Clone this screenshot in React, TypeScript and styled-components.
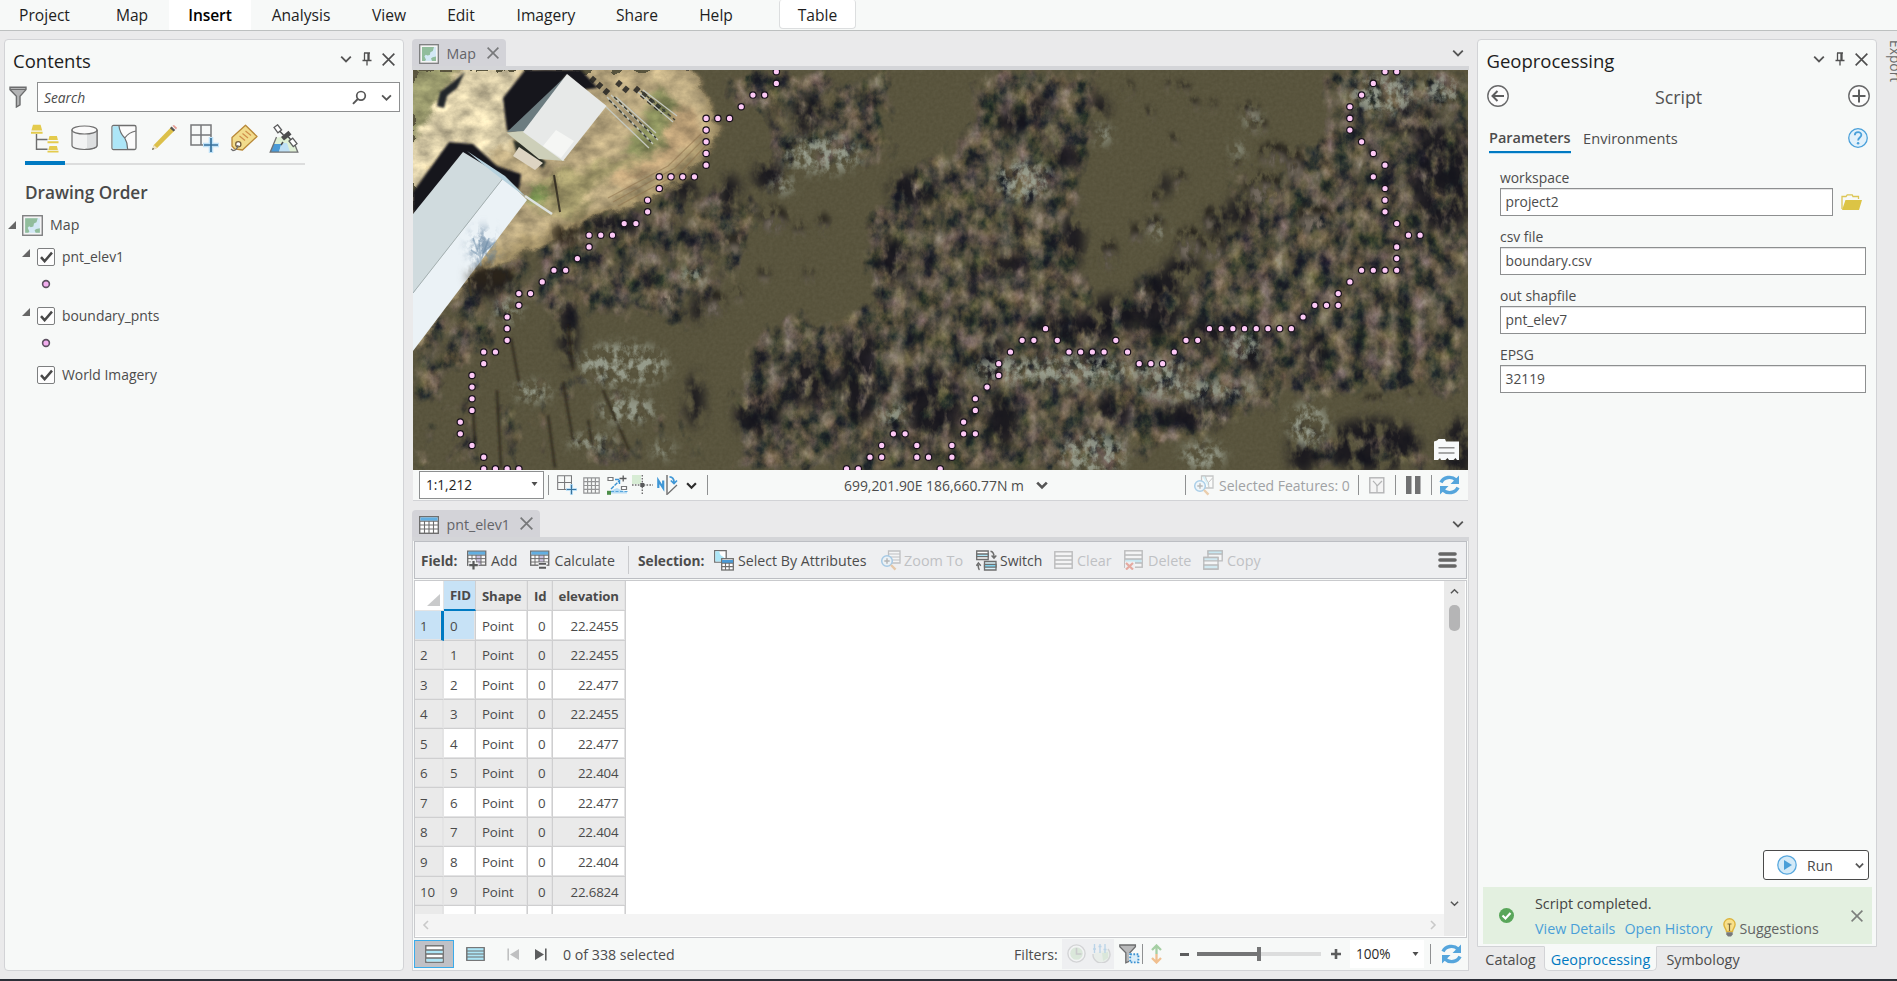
import React from 'react';
import styled, { createGlobalStyle, css } from 'styled-components';

const Global = createGlobalStyle`
  * { box-sizing: border-box; }
  html, body { margin: 0; padding: 0; overflow: hidden; }
  body { font-family: "Open Sans", "Noto Sans", sans-serif; font-size: 14px; color: #4c4c4c; }
  svg { display: block; flex: none; }
`;

/* ---------- shared parts ---------- */

const Screen = styled.div`
  width: 1897px; height: 981px; display: flex; flex-direction: column;
  background: #eaeaeb; overflow: hidden; border-bottom: 2px solid #2c2f37;
`;

const Ribbon = styled.nav`
  height: 31px; flex: none; display: flex; background: #f7f9f8;
  border-bottom: 1px solid #bdc0c0;
`;

const RibbonTab = styled.div<{ $w: number; $ml?: number; $kind?: 'active' | 'context' }>`
  width: ${p => p.$w}px; margin-left: ${p => p.$ml || 0}px;
  display: flex; align-items: center; justify-content: center;
  font-size: 15.6px; color: #1e1e1e; white-space: nowrap;
  ${p => p.$kind === 'active' && css`background: #fff; font-weight: 600; color: #000; letter-spacing: -0.1px;`}
  ${p => p.$kind === 'context' && css`
    background: #fff; height: 29px; border: 1px solid #dcdedf; border-top: 0; padding-top: 1px;
    border-radius: 3px 3px 4px 4px;`}
`;

const Workspace = styled.main`
  flex: 1; min-height: 0; display: flex; padding: 8px 0 8px 4px;
`;

const Panel = styled.section`
  display: flex; flex-direction: column; background: #f7f9f8;
  border: 1px solid #d2d3d6; border-radius: 4px; min-height: 0;
`;

const PanelHeader = styled.header<{ $pl: number; $pr: number }>`
  display: flex; align-items: center; height: 40px; flex: none; padding: 1px ${p => p.$pr}px 0 ${p => p.$pl}px;
`;

const PanelTitle = styled.h1`
  flex: 1; margin: 0; font-size: 18.5px; font-weight: 400; color: #1d1d1d;
`;

const HeaderButtons = styled.div`
  display: flex; align-items: center; gap: 9px; margin-top: -3px;
`;

const Spacer = styled.div`flex: 1;`;

/* ---------- contents panel ---------- */

const ContentsPanel = styled(Panel)`width: 400px; flex: none;`;

const SearchRow = styled.div`
  display: flex; align-items: center; padding: 2px 3px 0 4px; gap: 10px; height: 32px; flex: none;
`;

const SearchBox = styled.div`
  flex: 1; height: 30px; display: flex; align-items: center; background: #fff;
  border: 1px solid #8d8f90; padding: 0 7px 0 6px;
  span { flex: 1; font-size: 13.8px; font-style: italic; color: #4b4b4b; }
  svg + svg { margin-left: 14px; }
`;

const ListModes = styled.div`
  display: flex; margin: 9px 0 0 20px; flex: none;
`;

const ListMode = styled.div<{ $on?: boolean }>`
  width: 40px; height: 44px; padding: 3px 2px 0 0; display: flex; justify-content: center; align-items: flex-start;
  border-bottom: ${p => (p.$on ? '4px solid #007ac2' : '2px solid #dcdddd')};
`;

const SectionTitle = styled.h2`
  margin: 14px 0 0 20px; font-size: 17.2px; line-height: 28px; font-weight: 600; color: #494949;
`;

const TreeRow = styled.div<{ $pl: number; $h: number }>`
  display: flex; align-items: center; height: ${p => p.$h}px; padding-left: ${p => p.$pl}px; flex: none;
  font-size: ${p => (p.$pl < 10 ? 14.2 : 13.9)}px; line-height: 1;
`;

const Arrow = styled.div<{ $root?: boolean }>`
  margin: ${p => (p.$root ? '-2px 6px 0 0' : '-8px 7px 0 0')};
`;

const RootName = styled.span`margin-left: 7px;`;

const CheckBox = styled.div`
  width: 18px; height: 18px; flex: none; display: grid; place-items: center; margin-right: 7px;
  background: #fdfdfd; border: 1px solid #7d7f80; border-radius: 2px;
`;

/* ---------- centre column ---------- */

const Center = styled.div`
  width: 1057px; margin-left: 8px; display: flex; flex-direction: column; min-height: 0;
`;

const DocTabs = styled.div<{ $mt?: number }>`
  display: flex; height: 31px; flex: none; border-bottom: 4px solid #d4d5d8;
  justify-content: space-between; padding-right: 5px; margin-top: ${p => p.$mt || 0}px;
`;

const DocTab = styled.div<{ $w: number }>`
  width: ${p => p.$w}px; height: 27px; display: flex; align-items: center; background: #d3d3d8;
  border-radius: 4px 4px 0 0; padding: 2px 0 0 7px;
  span { margin-left: 7.5px; flex: 1; font-size: 14.2px; color: #636468; }
  > svg:last-child { margin: -2px 7px 0 0; }
`;

const TabMenu = styled.div`display: flex; align-items: center; padding-top: 1px;`;

const MapFrame = styled.div`
  position: relative; width: 1055px; height: 400px; margin-left: 1px; flex: none; overflow: hidden; background: #57523a;
`;

const LegendButton = styled.div`position: absolute; right: 9px; bottom: 10px;`;

const StatusBar = styled.div`
  height: 31px; flex: none; display: flex; align-items: center; background: #f7f9f8; margin: 0 1px;
  border-bottom: 1px solid #d2d3d6; padding-left: 6px;
`;

const Combo = styled.div`
  width: 125px; height: 28px; display: flex; align-items: center; justify-content: space-between;
  background: #fff; border: 1px solid #8d8f90; padding: 0 5px 2px 6px; font-size: 13.6px; color: #222;
`;

const Divider = styled.i<{ $ml: number; $h?: number; $c?: string }>`
  width: 1px; height: ${p => p.$h || 20}px; flex: none; margin-left: ${p => p.$ml}px; background: ${p => p.$c || '#8f9192'};
`;

const Slot = styled.div<{ $ml: number; $w: number; $dim?: boolean }>`
  margin-left: ${p => p.$ml}px; width: ${p => p.$w}px; flex: none; display: flex; justify-content: center;
  opacity: ${p => (p.$dim ? 0.4 : 1)};
`;

const BarText = styled.span<{ $ml: number; $w: number; $b?: boolean; $c?: string; $size?: number }>`
  margin-left: ${p => p.$ml}px; width: ${p => p.$w}px; flex: none; white-space: nowrap;
  font-size: ${p => p.$size || 14.2}px; font-weight: ${p => (p.$b ? 700 : 400)};
  color: ${p => p.$c || '#4c4c4c'};
`;

const DIM = '#bfc1c4';

const TablePane = styled.div`
  flex: 1; min-height: 0; display: flex; flex-direction: column; background: #f7f9f8;
  border: 1px solid #d2d3d6; border-top: 0; padding: 0 1px;
`;

const TableToolbar = styled.div`
  height: 38px; flex: none; display: flex; align-items: center; background: #eeeff1; border: 1px solid #bcbec3;
  padding: 0 9px 0 7px;
`;

const GridBox = styled.div`
  margin-top: 1px; height: 358px; flex: none; display: flex; background: #fff; border: 1px solid #c9cacd; padding: 0 1px 1px 0;
`;

const GridMain = styled.div`flex: 1; display: flex; flex-direction: column; min-width: 0;`;

const GridRows = styled.div`height: 333px; overflow: hidden;`;

const GridRow = styled.div<{ $shade?: boolean; $head?: boolean }>`
  display: grid; grid-template-columns: 29px 32px 52px 24.5px 73px; width: 210.5px;
  height: ${p => (p.$head ? 30 : 29.55)}px; font-size: ${p => (p.$head ? 13.2 : 13.3)}px;
  font-weight: ${p => (p.$head ? 700 : 400)};
  background: ${p => (p.$shade || p.$head ? '#eaeaea' : '#fff')};
`;

const Cell = styled.div<{ $kind?: 'corner' | 'num' | 'current' | 'sort' | 'selected'; $right?: boolean }>`
  display: flex; align-items: center; padding: 2px 6px 0 6px; line-height: 1;
  justify-content: ${p => (p.$right ? 'flex-end' : 'flex-start')};
  border-right: 1px solid #cfcfd0; border-bottom: 1px solid #cfcfd0; box-shadow: inset -1px -1px 0 #e3e3e4;
  white-space: nowrap; color: #4a4a4a; letter-spacing: -0.15px;
  ${p => p.$kind === 'num' && css`background: #eaeaea; border-right-color: #e4e4e4; padding-left: 5px;`}
  ${p => p.$kind === 'current' && css`background: #c7e2f6; border-right: 3px solid #007ac2; padding-left: 5px;`}
  ${p => p.$kind === 'sort' && css`background: #c7e2f6; border-bottom: 2px solid #007ac2; box-shadow: none;`}
  ${p => p.$kind === 'selected' && css`background: #c7e2f6;`}
  ${p => p.$kind === 'corner' && css`
    background: #fff; justify-content: flex-end; align-items: flex-end; padding: 0 3px 4px 0;
    border-color: #fff #e4e4e4 #e4e4e4 #fff; box-shadow: none;`}
`;

const HScroll = styled.div`
  flex: 1; background: #f4f4f4; display: flex; justify-content: space-between; align-items: center; padding: 0 6px;
`;

const VScroll = styled.div`
  width: 21px; background: #eaeaea; display: flex; flex-direction: column; align-items: center; padding: 6px 0 28px 0;
`;

const Thumb = styled.div`width: 11px; height: 26px; border-radius: 5px; background: #b5b5b6; margin: 9px 0 auto;`;

const TableFooter = styled.div`flex: 1; display: flex; align-items: center;`;

const ViewToggle = styled.div`
  width: 40px; height: 28px; display: grid; place-items: center; background: #c0c1c6; border: 1px solid #3aabea;
`;

const DisabledGroup = styled.div`
  margin-left: 6px; width: 52px; height: 30px; display: flex; align-items: center; justify-content: space-between;
  padding: 0 3px 2px 5px; background: #eeeff1; flex: none; svg { opacity: 0.28; }
`;

const Slider = styled.div`
  margin-left: 8px; width: 124px; height: 14px; display: flex; align-items: center; flex: none;
  i { height: 4px; background: #dcdddd; flex: 1; }
  i:first-child { flex: none; width: 60px; background: #747576; }
  b { width: 4px; height: 14px; background: #747576; }
`;

const ZoomCombo = styled.div`
  margin-left: 9px; width: 74px; height: 28px; background: #fff; display: flex; align-items: center;
  justify-content: space-between; padding: 0 5px 1px 6px; font-size: 13.6px; color: #2a2a2a; flex: none;
`;

/* ---------- geoprocessing column ---------- */

const RightColumn = styled.div`width: 400px; margin-left: 8px; display: flex; flex-direction: column;`;

const GpPanel = styled(Panel)`height: 908px; flex: none; border-bottom-left-radius: 0; border-bottom-right-radius: 0;`;

const ToolHeader = styled.div`
  height: 36px; display: flex; align-items: center; justify-content: space-between; padding: 0 6px 4px 9px; flex: none;
  span { font-size: 17.8px; color: #515151; padding-top: 2px; }
`;

const ToolTabs = styled.div`
  display: flex; align-items: flex-start; margin: 12px 8px 0 11px; height: 28px; flex: none; font-size: 14.6px;
  > svg { margin-left: auto; }
`;

const ToolTab = styled.div<{ $on?: boolean }>`
  height: 25px; margin-right: 12.5px; line-height: 20px;
  ${p => p.$on && css`font-weight: 600; font-size: 14.5px; border-bottom: 2px solid #007ac2; box-shadow: 0 1px 0 #bfe0f5;`}
`;

const Fields = styled.div`padding: 12px 10px 0 22px; flex: none;`;

const Field = styled.label`display: block; height: 59px; font-size: 13.9px; line-height: 20px;`;

const FieldLine = styled.div`
  display: flex; align-items: center; justify-content: space-between; padding-right: 0;
  svg { margin-right: 4px; }
`;

const Input = styled.div<{ $w: number }>`
  width: ${p => p.$w}px; height: 28px; background: #fff; border: 1px solid #8d8f90; padding-left: 4.5px;
  font-size: 13.8px; line-height: 25px; box-shadow: inset 0 1px 0 #e4e4e4;
`;

const RunButton = styled.button`
  margin: 0 7px 7px auto; width: 106px; height: 30px; flex: none; display: flex; align-items: center;
  background: #fff; border: 1px solid #4a4a4a; border-radius: 3px; padding: 0 4px 0 13px;
  font: 14px "Open Sans", sans-serif; color: #4a4a4a;
  span { margin-left: 10px; flex: 1; text-align: left; }
`;

const Message = styled.div`
  height: 57px; margin: 0 4px 2px 5px; background: #e3f0e0; display: flex; align-items: center; flex: none; padding: 0 9px 0 16px;
`;

const MessageBody = styled.div`margin-left: 21px; padding-top: 2px; flex: 1; font-size: 14.3px; line-height: 24px; color: #444;`;

const LinkLine = styled.div`
  display: flex; align-items: center; height: 26px; color: #4a9fd8; white-space: nowrap;
  a + a { margin-left: 9px; }
  svg { margin: -2px 3px 0 11px; }
  span { color: #626464; font-size: 14.2px; }
`;

const BottomTabs = styled.div`display: flex; font-size: 14.4px; color: #4c4c4c; height: 25px; margin-top: -1px;`;

const BottomTab = styled.div<{ $w: number; $on?: boolean }>`
  width: ${p => p.$w}px; text-align: center; line-height: 27px; height: 25px;
  ${p => p.$on && css`
    background: #f7f9f8; color: #0079c1; border: 1px solid #d2d3d6; border-top-color: #f7f9f8;
    border-radius: 0 0 5px 5px; line-height: 26px;`}
`;

const SideDock = styled.div`
  width: 20px; overflow: hidden; padding: 1px 0 0 9px;
  span { display: block; writing-mode: vertical-rl; font-size: 13.8px; line-height: 18px; color: #6b6b6b; height: 46px; }
`;

/* ---------- icons ---------- */

const G = '#6e6e6e';

const Chevron = ({ s = 10, w = 1.6, c = '#555', dir = 0 }: { s?: number; w?: number; c?: string; dir?: number }) => (
  <svg width={s} height={s} viewBox="0 0 10 10"><path d="M1 3l4 4 4-4" fill="none" stroke={c} strokeWidth={w} transform={`rotate(${dir} 5 5)`} /></svg>
);
const Close = ({ s = 12, c = '#4e4e4e', w = 1.6 }) => (
  <svg width={s} height={s} viewBox="0 0 12 12"><path d="M.6.6l10.8 10.8M11.4.6L.6 11.4" stroke={c} strokeWidth={w} /></svg>
);
const Pin = () => (
  <svg width="12" height="14" viewBox="0 0 12 14"><path d="M3 1h6M3.5 1v7M8 1v7M7 1v7M1.5 8.5h9M6 9v4.5" stroke="#505050" strokeWidth="1.3" fill="none" /></svg>
);
const Caret = () => <svg width="7" height="4" viewBox="0 0 7 4"><path d="M.5 0h6l-3 4z" fill="#4e4e4e" /></svg>;
const Triangle = () => <svg width="8" height="8" viewBox="0 0 8 8"><path d="M8 0v8H0z" fill="#666" /></svg>;

const MapIcon = ({ s = 20 }) => (
  <svg width={s} height={s} viewBox="0 0 20 20">
    <rect x=".7" y=".7" width="18.600" height="18.600" fill="#f4f4f4" stroke="#7b7c7d" strokeWidth="1.300" />
    <rect x="3" y="3" width="14" height="14" fill="#d3e8f5" />
    <path d="M3 3h12l-1.200 4-2.400 1.200-.6 2.800-2.400.6-1.600-.8-1.400 1.400 1.600 3.600-1 1.200H3z" fill="#91bd9c" />
    <path d="M12 14.500l1.600-1.200L17 12.500V17h-4z" fill="#91bd9c" />
  </svg>
);
const Check = () => <svg width="13" height="12" viewBox="0 0 13 12"><path d="M1 6.200l3.600 4L12 1.600" fill="none" stroke="#484848" strokeWidth="2.500" /></svg>;
const PointSymbol = () => <svg width="10" height="10" viewBox="0 0 10 10"><circle cx="5" cy="5" r="3.400" fill="#f2aeee" stroke="#5c5060" strokeWidth="1.600" /></svg>;

const Funnel = () => (
  <svg width="18" height="22" viewBox="0 0 18 22"><path d="M1 1.200h16v2.400l-6 6.600v8.600L7.400 21V10.200L1 3.600z" fill="#b3b4b5" stroke="#6c6d6e" strokeWidth="1.400" /><path d="M1 3.500h16" stroke="#6c6d6e" /></svg>
);
const Magnifier = () => (
  <svg width="15" height="15" viewBox="0 0 15 15"><circle cx="9" cy="5.800" r="4.300" fill="none" stroke="#555" strokeWidth="1.700" /><path d="M5.800 9L1 13.800" stroke="#555" strokeWidth="1.900" /></svg>
);

const TreeIcon = () => (
  <svg width="29" height="29" viewBox="0 0 29 29">
    <path d="M6.500 10v15.200h11M6.500 15.500h11" stroke={G} strokeWidth="1.400" fill="none" />
    <g fill="#e4cb4d"><path d="M3 .8h7.600l1.600 5.700H1.400zM1 7.800h11.600v2H1zM19.500 12h7.400l1 4h-9.600zM17.500 17.200h11v2h-11zM19.500 22h7.400l1 4h-9.600zM17.500 26.800h11v1.600h-11z" /></g>
  </svg>
);
const CylinderIcon = () => (
  <svg width="27" height="27" viewBox="0 0 27 27">
    <path d="M1 6v15.500c0 2.300 5.600 4 12.500 4S26 23.800 26 21.500V6z" fill="#f2f3f3" stroke={G} strokeWidth="1.200" />
    <path d="M16 10l10-4v15c0 2-4 4-10 4z" fill="#dddfe0" /><path d="M26 6v15.500c0 2.300-5.600 4-12.500 4" fill="none" stroke={G} strokeWidth="1.200" />
    <ellipse cx="13.500" cy="6" rx="12.500" ry="4" fill="#fafafa" stroke={G} strokeWidth="1.200" />
  </svg>
);
const SelectionIcon = () => (
  <svg width="26" height="27" viewBox="0 0 26 27">
    <rect x="1" y="1.500" width="24" height="24" rx="1.500" fill="#fbfbfb" stroke={G} strokeWidth="1.300" />
    <path d="M1.700 2.200h6.500c.5 5 2.800 9 5.600 11.600 1.700 3 2.600 7 2.800 11H1.700z" fill="#ade6f7" />
    <path d="M8 2c.5 5.200 3 9.200 5.800 12 1.800 3 2.700 7 2.800 11M13.800 14c2.400-3.400 6-6 11-7" fill="none" stroke={G} strokeWidth="1.200" />
  </svg>
);
const PencilIcon = () => (
  <svg width="26" height="27" viewBox="0 0 26 27">
    <path d="M1 26l1.800-5L20 3.200l3.600 3.400L6.200 24z" fill="#dcc04a" /><path d="M1 26l1.800-5 3.400 3z" fill="#efe3c8" /><path d="M1 26l.8-2.200 1.500 1.300z" fill="#555" />
    <path d="M19 4.200l3.600 3.400L24.200 6l-3.600-3.500z" fill="#555" /><path d="M21.400 1.800L23 1l3 2.800-1 1.600z" fill="#e59c93" />
  </svg>
);
const GridPlus = ({ s = 29 }) => (
  <svg width={s} height={s} viewBox="0 0 29 29">
    <path d="M1 1h20v20H1zM11 1v20M1 11h20" fill="none" stroke="#77787a" strokeWidth="1.500" />
    <path d="M13 21h16M21 13v16" stroke="#bfe2f8" strokeWidth="4.500" /><path d="M14 21h14M21 14v14" stroke="#38729c" strokeWidth="1.700" />
  </svg>
);
const TagIcon = () => (
  <svg width="28" height="28" viewBox="0 0 28 28">
    <path d="M15.500 1.200L27 12.500 12.500 26l-8-1.200L2 22v-8.500z" fill="#f2dc8c" stroke="#b88838" strokeWidth="1.300" strokeLinejoin="round" />
    <path d="M9.500 12l5.500 4.500M12.500 9.500l5.500 4.500M15.500 7l5.500 4.500" stroke="#d08f4c" strokeWidth="1.200" />
    <circle cx="8.300" cy="20.200" r="2.600" fill="#fff" stroke="#77603a" strokeWidth="1.300" /><path d="M8 21c-.5 3-2 5.500-5 5.500L1 25" fill="none" stroke={G} strokeWidth="1.300" />
  </svg>
);
const SatelliteIcon = () => (
  <svg width="30" height="29" viewBox="0 0 30 29">
    <path d="M7 14L1.500 28h27L24 17 15 12z" fill="#dff0d5" /><path d="M4.500 20h8L10 28H1.300z" fill="#4a9ad6" /><path d="M12.500 19h5.500l3 9H10z" fill="#bfe0f5" />
    <path d="M7.500 13L1.200 28.200h27.600L26 21" fill="none" stroke="#707172" strokeWidth="1.300" />
    <g stroke="#5c5d5e" strokeWidth="1.300" fill="#fff"><path d="M5 3.500L8.600.8l4 5.200-3.700 2.800zM20 17l3.700-2.800 4.300 5.500-3.700 2.900z" /></g>
    <path d="M12 13l7.500-6.200 3 3.600-7.500 6.200z" fill="#4c4d4e" /><path d="M10.500 7l4 4M19 12.500l3 3.500M14 18l-2 3" stroke="#4c4d4e" strokeWidth="1.500" />
  </svg>
);

const TableIcon = () => (
  <svg width="20" height="18" viewBox="0 0 20 18"><rect x=".7" y=".7" width="18.600" height="16.600" fill="#fff" stroke={G} strokeWidth="1.400" /><rect x="1.400" y="1.400" width="17.200" height="3.400" fill="#62afe2" /><path d="M1 5.200h18M1 9h18M1 13h18M5.500 5v12M10 5v12M14.500 5v12" stroke={G} strokeWidth="1.100" /></svg>
);
const FieldIcon = ({ calc }: { calc?: boolean }) => (
  <svg width="20" height="20" viewBox="0 0 20 20"><rect x=".7" y="1.200" width="18" height="14" fill="#f8f8f8" stroke={G} strokeWidth="1.400" /><rect x="1.400" y="1.600" width="16.800" height="3.200" fill="#62afe2" /><rect x="9" y="5" width="5" height="10" fill="#c9bfdc" /><path d="M1 5.200h18M1 8.600h18M1 12h18M5 5v10M9 5v10M14 5v10" stroke={G} />
    {calc ? <><rect x="8.500" y="12" width="8" height="8" fill="#eeeff1" /><path d="M9 13.800h7M9 17.800h7" stroke="#58595a" strokeWidth="2" /></> : <><path d="M6.500 10v10M1.500 15h10" stroke="#eeeff1" strokeWidth="5" /><path d="M6.500 11v8.500M2.200 15.200h8.600" stroke="#58595a" strokeWidth="2.200" /></>}
  </svg>
);
const SelectAttrIcon = () => (
  <svg width="20" height="21" viewBox="0 0 20 21"><path d="M.7.700h11.500v11.500H.7z" fill="#fff" stroke={G} strokeWidth="1.300" /><path d="M1.300 1.300h4c0 3 2 5 4.500 6v4.300H1.300z" fill="#ade6f7" /><rect x="7.700" y="8.700" width="11.600" height="11.300" fill="#fff" stroke={G} strokeWidth="1.300" /><path d="M8 10h11v3H8z" fill="#4a9ad6" /><path d="M8 13.300h11M8 16.600h11M11.500 13v7M15.200 13v7" stroke={G} strokeWidth="1.100" /></svg>
);
const ZoomToIcon = ({ map }: { map?: boolean }) => (
  <svg width="21" height="21" viewBox="0 0 21 21"><path d="M8.500 1h11.500v12H8.500z" fill="#fff" stroke="#7b7c7d" strokeWidth="1.300" />{map ? <path d="M9 1h3.500c.5 3 1.500 5 3 6.500 0 2 .4 4 .5 5.500M15.500 7.500L19.500 3" fill="#ade6f7" stroke="#7b7c7d" /> : <path d="M9 4h11M9 7h11M9 10h11" stroke="#7b7c7d" strokeWidth="1.100" />}
    <circle cx="7" cy="11" r="5.300" fill="#e8f4fb" stroke="#3b92d2" strokeWidth="1.500" /><path d="M4.300 11h5.400M7 8.300v5.400" stroke="#58595a" strokeWidth="1.400" /><path d="M11 15l4.500 4.700" stroke="#d98f3f" strokeWidth="2.400" /></svg>
);
const SwitchIcon = () => (
  <svg width="21" height="21" viewBox="0 0 21 21"><g stroke={G} strokeWidth="1.300"><path d="M.7 1h11.500v8.500H.7z" fill="#fff" /><path d="M.7 4h11.500v2.700H.7z" fill="#ade6f7" /><path d="M8.500 11.500H20V20H8.500z" fill="#d9f2fa" /><path d="M8.500 14.300H20v2.800H8.500z" fill="#7fd3ee" /></g><path d="M14.500 1.200c2.500.3 3.500 2 3.500 5.800M15.600 5.500L18 8.200l2.300-2.700M3.500 19.800c-1-.8-1.300-2-1.300-5M.4 15.800l2-2.800 2.400 2.800" fill="none" stroke={G} strokeWidth="1.500" /></svg>
);
const RowsIcon = ({ kind, w = 19, h = 18 }: { kind: 'plain' | 'mixed' | 'all' | 'delete'; w?: number; h?: number }) => (
  <svg width={w} height={h + (kind === 'delete' ? 2 : 0)} viewBox={kind === 'delete' ? '0 0 19 20' : '0 0 19 18'} preserveAspectRatio="none">
    <rect x=".8" y=".8" width="17.400" height="16.400" fill={kind === 'all' ? '#ade6f7' : '#fdfdfd'} stroke={G} strokeWidth="1.400" />
    {kind === 'mixed' && <path d="M1.500 5h16v4h-16zM1.500 13h16v3.500h-16z" fill="#ade6f7" />}
    {kind === 'delete' && <path d="M1.500 9h16v4h-16z" fill="#8fdcf2" />}
    <path d="M1 5h17M1 9h17M1 13h17" stroke={G} strokeWidth="1.300" />
    {kind === 'delete' && <><rect x="1" y="11.500" width="10" height="9" fill="#eeeff1" /><path d="M2 13l7 6.500M9 13l-7 6.500" stroke="#d8442c" strokeWidth="2.200" /></>}
  </svg>
);
const CopyIcon = () => (
  <svg width="20" height="20" viewBox="0 0 20 20"><g stroke={G} strokeWidth="1.300"><path d="M5 .8h14.200v10H5z" fill="#fff" /><path d="M5 .8h14.200V4H5z" fill="#8fdcf2" /><path d="M.8 7.500H15v11.700H.8z" fill="#fff" /><path d="M.8 7.500H15v3.300H.8zM.8 15H15v4H.8z" fill="#a8e2f3" /></g></svg>
);
const Refresh = () => (
  <svg width="21" height="20" viewBox="0 0 21 20"><g fill="none" stroke="#55a5dc" strokeWidth="3.400"><path d="M2 7.500C4.500 2 12.500.600 17 5" /><path d="M19 12.500C16.500 18 8.500 19.400 4 15" /></g><path d="M20 .5v8.500h-8.500zM1 19.500V11h8.500z" fill="#55a5dc" /></svg>
);
const GridIcon = () => (
  <svg width="17" height="17" viewBox="0 0 17 17"><path d="M.8.800h15.400v15.400H.8zM4.600 1v15M8.500 1v15M12.400 1v15M1 4.600h15M1 8.500h15M1 12.400h15" fill="none" stroke="#949596" strokeWidth="1.200" /></svg>
);
const DynamicIcon = () => (
  <svg width="21" height="20" viewBox="0 0 21 20"><path d="M1 2.500h5v3H1zM14.500 11.500h5v3h-5z" fill="#fff" stroke="#77787a" strokeWidth="1.200" /><path d="M1 17l9-4 4 2 6 2v1.500H1z" fill="#b7dcf4" /><rect y="15.800" width="4" height="4" fill="#4d8e4a" /><path d="M4 16.500h16.500" stroke="#58a6dc" strokeDasharray="3 1.500" /><path d="M4 14L13 5M8 4.500h4.500V9" fill="none" stroke="#3b92d2" strokeWidth="1.400" strokeDasharray="4 1" /><path d="M12.500 3.500h7M16.200.500v6" stroke="#58595a" strokeWidth="1.300" /></svg>
);
const SnapIcon = () => (
  <svg width="21" height="20" viewBox="0 0 21 20"><rect width="9" height="9" fill="#d7ecd4" /><path d="M0 10h21M10.300 0v20" stroke="#6e6e6e" strokeWidth="1.400" strokeDasharray="1.600 1.300" /><rect x="8.300" y="8" width="4" height="4" fill="#58595a" /></svg>
);
const NorthIcon = () => (
  <svg width="21" height="20" viewBox="0 0 21 20"><path d="M1.300 13V5.500L6.200 13V5.500" fill="none" stroke="#3f97d6" strokeWidth="2.200" /><path d="M10 0v20" stroke={G} strokeWidth="1.400" /><path d="M10.500 19L20 10" stroke={G} strokeWidth="1.200" /><path d="M12.500 1.800c3 0 4.500 1.600 4.500 5.700M13.800 5.500l3.200 3 3-3" fill="none" stroke="#3f97d6" strokeWidth="1.700" /></svg>
);
const RangeMapIcon = () => (
  <svg width="16" height="17" viewBox="0 0 16 17"><rect x=".8" y=".8" width="14" height="15" fill="#f4f4f4" stroke="#b3b4b5" strokeWidth="1.400" /><path d="M4 4c2 2 3.500 3 4 5v6M8 9l5-5" fill="none" stroke="#b3b4b5" strokeWidth="1.200" /></svg>
);
const PauseIcon = () => <svg width="15" height="18"><path d="M0 0h5.500v18H0zM9 0h5.500v18H9z" fill="#707172" /></svg>;
const MenuIcon = () => <svg width="19" height="18"><path d="M2 3h15M2 9h15M2 15h15" stroke="#666" strokeWidth="3.600" strokeLinecap="round" /></svg>;
const CornerIcon = () => <svg width="13" height="12"><path d="M13 0v12H0z" fill="#c9cacb" /></svg>;
const Minus = () => <svg width="9" height="3"><path d="M0 0h9v3H0z" fill="#5c5d5e" /></svg>;
const Plus = () => <svg width="10" height="10"><path d="M0 3.700h10v2.600H0zM3.700 0h2.600v10H3.700z" fill="#5c5d5e" /></svg>;
const LegendIcon = () => (
  <svg width="25" height="21" viewBox="0 0 25 21"><path d="M0 2.500l3-1L4.500 0H11l1 2.500h13V21h-2l-1.500-2-2 2H15l-1.500-2-2 2H7l-1-2-2 2H0z" fill="#f7f9fa" /><path d="M4.500 8.800h16M4.500 14h16" stroke="#8c8c8c" strokeWidth="1.400" /></svg>
);
const FilterSelect = () => (
  <svg width="21" height="20" viewBox="0 0 21 20"><path d="M.8 1h15.600v1.800l-5.600 6V17l-4 1.800V8.800L.8 2.800z" fill="#b9babb" stroke="#6c6d6e" strokeWidth="1.300" /><rect x="10" y="9" width="11" height="11" fill="#f7f9f8" /><rect x="11.200" y="10.200" width="8.200" height="8.200" fill="#d9edf9" stroke="#3b92d2" strokeWidth="1.900" strokeDasharray="1.700 1.500" /></svg>
);
const ClockIcon = () => (
  <svg width="19" height="19" viewBox="0 0 19 19"><circle cx="9.500" cy="9.500" r="8.600" fill="#fff" stroke="#8c8d8e" strokeWidth="1.400" /><circle cx="9.500" cy="9.500" r="6.300" fill="#a9d4a2" /><path d="M9.500 4v6h5" fill="none" stroke="#6e6e6e" strokeWidth="1.600" /></svg>
);
const RangeIcon = () => (
  <svg width="19" height="19" viewBox="0 0 19 19"><path d="M1 10a8.500 8.500 0 1 0 15-5" fill="#dcebd8" stroke="#8c8d8e" strokeWidth="1.400" /><path d="M10 9l6-1v6l-5 3z" fill="#a9d4a2" /><path d="M2.500 0v9M8 0v9M13 0v9M1 5h3M6.500 2.500h3M11.500 5.500h3" stroke="#3b92d2" strokeWidth="1.400" /></svg>
);
const UpDown = () => (
  <svg width="11" height="20" viewBox="0 0 11 20"><path d="M5.500 1v9M1 6l4.500-4.500L10 6" fill="none" stroke="#a5cfa3" strokeWidth="2.300" /><path d="M5.500 19v-9M1 14l4.500 4.500L10 14" fill="none" stroke="#f0bf8f" strokeWidth="2.300" /></svg>
);
const Seek = ({ next }: { next?: boolean }) => (
  <svg width="12" height="13" viewBox="0 0 12 13">{next ? <path d="M0 1v11l9-5.500zM10 .5h1.600v12H10z" fill="#5c5d5e" /> : <path d="M12 1v11L3 6.500zM.4.500H2v12H.4z" fill="#bfc0c1" />}</svg>
);
const CircleIcon = ({ kind }: { kind: 'back' | 'add' | 'help' }) => (
  <svg width={kind === 'help' ? 20 : 22} height={kind === 'help' ? 20 : 22} viewBox="0 0 22 22">
    <circle cx="11" cy="11" r="10.200" fill={kind === 'help' ? '#e2f1fb' : '#fcfcfc'} stroke={kind === 'help' ? '#4aa0da' : '#68696a'} strokeWidth="1.400" />
    {kind === 'back' && <path d="M17 11H6M10.500 6L5.500 11l5 5" fill="none" stroke="#5c5d5e" strokeWidth="2" />}
    {kind === 'add' && <path d="M11 4.500v13M4.500 11h13" stroke="#5c5d5e" strokeWidth="2" />}
    {kind === 'help' && <><path d="M7.500 8c0-4.500 7.200-4.500 7.200-.3 0 2.700-3.600 2.900-3.600 6" fill="none" stroke="#4aa0da" strokeWidth="2" /><circle cx="11.100" cy="16.800" r="1.400" fill="#4aa0da" /></>}
  </svg>
);
const FolderIcon = () => (
  <svg width="21" height="16" viewBox="0 0 21 16"><path d="M1 15V2.500h4L6.200.800h5L12 2.500h5.500V5" fill="none" stroke="#dcc654" strokeWidth="1.300" /><path d="M4.500 6H21l-3 10H1z" fill="#dcc445" /></svg>
);
const PlayIcon = () => (
  <svg width="20" height="20" viewBox="0 0 20 20"><circle cx="10" cy="10" r="9.200" fill="#d3eaf8" stroke="#58a8de" strokeWidth="1.300" /><path d="M7 5v10l8-5z" fill="#4a9fd8" /></svg>
);
const DoneIcon = () => (
  <svg width="15" height="15" viewBox="0 0 15 15"><circle cx="7.500" cy="7.500" r="7.500" fill="#59a65a" /><path d="M3.500 7.500l3 3 5-5.500" fill="none" stroke="#fff" strokeWidth="2.200" /></svg>
);
const BulbIcon = () => (
  <svg width="13" height="19" viewBox="0 0 13 19"><path d="M6.500.800a5.500 5.500 0 0 1 5.600 5.500c0 3.200-2.300 4-2.600 7.200h-6C3.200 10.300.900 9.500.900 6.300A5.500 5.500 0 0 1 6.500.800z" fill="#f8e08a" stroke="#dcb33c" strokeWidth="1.400" /><path d="M4.500 6h4M6.500 6v7" stroke="#7c6a3c" strokeWidth="1.200" /><path d="M3.300 14.200h6.400v2.300L8 18.500H5l-1.700-2z" fill="#77787a" /></svg>
);

/* ---------- aerial imagery with boundary points ---------- */

// Runs of lattice points: row, first column, last column
const RUNS: [number, number, number][] = [
  [0, 31, 31], [1, 31, 31], [2, 29, 30], [3, 28, 28], [4, 25, 27], [5, 25, 25], [6, 25, 25], [7, 25, 25], [8, 25, 25],
  [9, 21, 24], [10, 21, 21], [11, 20, 20], [12, 20, 20], [13, 18, 19], [14, 15, 17], [15, 15, 15], [16, 14, 14],
  [17, 12, 13], [18, 11, 11], [19, 9, 10], [20, 9, 9], [21, 8, 8], [22, 8, 8], [23, 8, 8], [24, 6, 7], [25, 6, 6],
  [26, 5, 5], [27, 5, 5], [28, 5, 5], [29, 5, 5], [30, 4, 4], [31, 4, 4], [32, 5, 5], [33, 6, 6], [34, 6, 9],
  [34, 37, 38], [33, 39, 40], [32, 40, 40], [31, 41, 42], [32, 43, 43], [33, 43, 44], [34, 45, 45], [33, 46, 46],
  [32, 46, 46], [31, 47, 48], [30, 47, 47], [29, 48, 48], [28, 48, 48], [27, 49, 49], [26, 50, 50], [25, 50, 50],
  [24, 51, 51], [23, 52, 53], [22, 54, 54], [23, 55, 55], [24, 56, 59], [23, 60, 60], [24, 61, 61], [25, 62, 64],
  [24, 65, 65], [23, 66, 67], [22, 68, 75], [21, 76, 76], [20, 77, 79], [19, 79, 79], [18, 80, 80], [17, 81, 84],
  [16, 84, 84], [15, 84, 84], [14, 85, 86], [13, 84, 84], [12, 83, 83], [11, 83, 83], [10, 83, 83], [9, 82, 82],
  [8, 83, 83], [7, 82, 82], [6, 81, 81], [5, 80, 80], [4, 80, 80], [3, 80, 80], [2, 81, 81], [1, 82, 82], [0, 83, 84],
];
const POINTS = RUNS.flatMap(([r, a, b]) =>
  Array.from({ length: b - a + 1 }, (_, k) => [0.5 + 11.705 * (a + k), 1.7 + 11.68 * r]));

// Deep-shadow canopy patches: cx, cy, rx, ry
const SHADOWS = [
  [395, 45, 14, 16], [355, 105, 12, 14], [480, 190, 14, 20], [500, 120, 22, 14], [446, 305, 18, 46], [520, 335, 26, 34],
  [395, 310, 22, 20], [345, 345, 20, 20], [625, 40, 12, 10], [598, 52, 14, 10], [652, 86, 14, 10], [660, 170, 9, 24], [590, 195, 28, 7],
  [580, 290, 12, 24], [660, 260, 40, 14], [745, 235, 22, 30], [800, 262, 24, 12], [700, 245, 22, 18], [1000, 50, 22, 12],
  [1030, 110, 30, 50], [770, 200, 16, 12], [780, 345, 34, 10], [700, 340, 18, 12], [590, 350, 14, 26],
  [960, 375, 46, 24], [1045, 380, 12, 30], [890, 380, 12, 22], [830, 140, 10, 16], [200, 155, 24, 10],
  [75, 212, 22, 12], [155, 260, 7, 34], [272, 120, 12, 8], [317, 125, 8, 18], [282, 330, 6, 24], [285, 240, 5, 10],
  [687, 40, 6, 14], [805, 150, 8, 14], [840, 285, 10, 14], [905, 285, 12, 14], [752, 115, 4, 8],
];
// Bare crowns catching the light
const CROWNS = [
  [210, 295, 46, 22], [215, 340, 30, 14], [120, 322, 20, 10], [410, 85, 40, 18], [830, 275, 18, 16], [690, 65, 9, 10], [970, 25, 34, 20],
  [790, 385, 22, 14], [895, 355, 20, 22], [660, 300, 60, 16], [590, 300, 30, 14], [680, 385, 34, 22], [785, 320, 60, 10], [480, 345, 16, 10],
  [95, 240, 14, 12], [745, 160, 10, 8], [745, 300, 34, 10], [280, 205, 14, 9], [180, 372, 26, 8], [250, 380, 12, 8],
  [610, 110, 30, 20], [370, 115, 12, 9], [840, 50, 10, 8], [825, 80, 7, 9], [1030, 20, 20, 14],
];
// Scrub standing in open water
const SCRUB = [
  [715, 20, 4, 7], [735, 44, 4, 5], [755, 14, 3, 5], [770, 18, 7, 4], [780, 34, 4, 6], [798, 36, 4, 4], [835, 40, 10, 5], [845, 56, 8, 6], [760, 70, 6, 3],
  [765, 110, 7, 8], [740, 130, 6, 6], [820, 95, 5, 5], [795, 150, 6, 10], [775, 175, 14, 16], [740, 155, 9, 7], [722, 165, 6, 9], [695, 185, 8, 14], [800, 180, 12, 12],
  [730, 225, 8, 8], [320, 175, 10, 8], [350, 205, 6, 5], [385, 160, 5, 6], [395, 205, 4, 8], [410, 155, 6, 9], [300, 235, 12, 12], [255, 235, 10, 8],
  [360, 150, 14, 12], [325, 225, 6, 5], [860, 85, 16, 10], [850, 120, 20, 16], [880, 95, 10, 14], [900, 150, 20, 14], [960, 330, 12, 3], [1000, 325, 8, 3],
];
// Long trunk shadows lying on the water
const TRUNKS = 'M84 320L88 398M150 312L160 370 168 372M98 268L107 318M190 320L216 380M155 255L160 300M135 345L142 398M175 350L180 380M60 340L62 372';

const AREA = { x: 0, y: 0, width: 1055, height: 400, filterUnits: 'userSpaceOnUse' as const, colorInterpolationFilters: 'sRGB' as const };

const Imagery = () => (
  <svg width="1055" height="400" viewBox="0 0 1055 400">
    <defs>
      <filter id="canopy" {...AREA}>
        <feGaussianBlur in="SourceAlpha" stdDeviation="9" result="b" />
        <feTurbulence type="fractalNoise" baseFrequency=".045 .03" numOctaves="5" seed="5" />
        <feColorMatrix values="0 0 0 0 0  0 0 0 0 0  0 0 0 0 0  1 0 0 0 0" result="n" />
        <feComposite in="b" in2="n" operator="arithmetic" k2=".85" k3="1.15" k4="-.65" />
        <feComponentTransfer result="m"><feFuncA type="linear" slope="3" intercept="-.85" /></feComponentTransfer>
        <feTurbulence type="fractalNoise" baseFrequency=".065 .05" numOctaves="5" seed="11" />
        <feColorMatrix values="1 0 0 0 0  .88 .12 0 0 0  .8 0 .2 0 0  0 0 0 0 1" />
        <feComponentTransfer result="t">
          <feFuncR type="table" tableValues=".09 .09 .1 .15 .24 .325 .405 .47 .54 .6 .6" />
          <feFuncG type="table" tableValues=".09 .09 .1 .15 .23 .305 .375 .44 .51 .58 .6" />
          <feFuncB type="table" tableValues=".13 .13 .13 .155 .195 .245 .31 .38 .46 .54 .55" />
        </feComponentTransfer>
        <feComposite in="t" in2="m" operator="in" />
      </filter>
      <filter id="rough" {...AREA}>
        <feGaussianBlur in="SourceGraphic" stdDeviation="6" result="b" />
        <feTurbulence type="fractalNoise" baseFrequency=".08 .05" numOctaves="4" seed="23" />
        <feColorMatrix values="0 0 0 0 0  0 0 0 0 0  0 0 0 0 0  3.500 0 0 0 -1.1" result="n" />
        <feComposite in="b" in2="n" operator="in" />
      </filter>
      <filter id="scrub" {...AREA}>
        <feGaussianBlur in="SourceGraphic" stdDeviation="3" result="b" />
        <feTurbulence type="fractalNoise" baseFrequency=".12 .07" numOctaves="4" seed="31" />
        <feColorMatrix values="0 0 0 0 0  0 0 0 0 0  0 0 0 0 0  4 0 0 0 -1.5" result="n" />
        <feComposite in="b" in2="n" operator="in" />
      </filter>
      <filter id="twigs" {...AREA}>
        <feGaussianBlur in="SourceGraphic" stdDeviation="6" result="b" />
        <feTurbulence type="fractalNoise" baseFrequency=".12 .1" numOctaves="5" seed="41" />
        <feColorMatrix values="0 0 0 0 0  0 0 0 0 0  0 0 0 0 0  3.600 0 0 0 -1.45" result="n" />
        <feComposite in="b" in2="n" operator="in" />
      </filter>
      <filter id="grain" {...AREA}>
        <feTurbulence type="fractalNoise" baseFrequency=".3" numOctaves="2" seed="2" />
        <feColorMatrix values="1 0 0 0 0  1 0 0 0 0  1 0 0 0 0  0 0 0 0 .05" />
      </filter>
      <filter id="soil" {...AREA}>
        <feTurbulence type="fractalNoise" baseFrequency=".05 .07" numOctaves="5" seed="9" result="n" />
        <feGaussianBlur in="SourceGraphic" stdDeviation="3" />
        <feDisplacementMap in2="n" scale="20" xChannelSelector="R" yChannelSelector="G" result="d" />
        <feColorMatrix in="n" values="1 0 0 0 0  1 0 0 0 0  1 0 0 0 0  0 0 0 0 1" result="g" />
        <feComposite in="d" in2="g" operator="arithmetic" k1=".65" k2=".67" />
        <feComposite in2="d" operator="in" />
      </filter>
      <filter id="soft"><feGaussianBlur stdDeviation="1.200" /></filter>
      <filter id="edge"><feGaussianBlur stdDeviation=".5" /></filter>
    </defs>
    <rect width="1055" height="400" fill="#57523a" />
    <rect width="1055" height="400" filter="url(#grain)" />

    <g filter="url(#canopy)">
      <path d="M250 0H490L478 50 490 95 455 100 430 92 400 100 365 90 350 50 300 28z" fillOpacity=".8" />
      <path d="M350 80L380 95 370 130 345 125z" fillOpacity=".6" />
      <path d="M55 200L120 175 190 140 260 122 310 118 345 130 345 170 320 200 290 250 240 262 200 250 150 255 110 230 70 280 0 330V262z" fillOpacity=".8" />
      <path d="M563 0H690L682 60 668 115 662 180 678 240 640 262 560 268 480 265 450 215 455 150 520 80 555 60z" />
      <path d="M905 0H1055V325L950 320 860 335 780 370 700 400H325L320 330 350 255 450 240 560 265 690 250 730 195 790 215 820 160 870 110 912 60z" />
      <path d="M0 280L60 270 90 310 200 290 260 320 300 400H0z" fillOpacity=".4" />
      <path d="M880 400L900 370 980 350 1030 380 1055 360V400z" fillOpacity=".7" />
      <path d="M820 100H900V200L800 220 790 170z" fillOpacity=".4" />
    </g>
    <g filter="url(#rough)" fill="#15141c" fillOpacity=".9">{SHADOWS.map(([x, y, a, b], i) => <ellipse key={i} cx={x} cy={y} rx={a + 3} ry={b + 3} />)}</g>
    <g filter="url(#scrub)" fill="#26231d">{SCRUB.map(([x, y, a, b], i) => <ellipse key={i} cx={x + 1} cy={y - 2} rx={a} ry={b + 1} />)}</g>
    <path d={TRUNKS} fill="none" stroke="#231f19" strokeWidth="2.600" opacity=".65" filter="url(#soft)" />
    <g filter="url(#twigs)" fill="#a0a798" fillOpacity=".85">{CROWNS.map(([x, y, a, b], i) => <ellipse key={i} cx={x} cy={y} rx={a} ry={b} />)}</g>
    <g filter="url(#scrub)" fill="#93887b" fillOpacity=".7">{SCRUB.map(([x, y, a, b], i) => <ellipse key={i} cx={x + 1} cy={y + 4} rx={a * 0.8} ry={b * 0.7} />)}</g>

    <g filter="url(#soil)">
      <path d="M-30-30H262L300 32 310 62 288 94 242 130 192 145 165 160 135 176 80 200 55 215-30 320z" fill="#a8966c" />
      <path d="M-30-30H262L290 25 298 60 275 85 232 118 182 138 150 150 124 165 70 188-30 320z" fill="#b9a77f" />
      <path d="M150 100L205 92 235 82 262 50 258 75 222 96 185 112 165 148 120 140 128 110z" fill="#a39a6b" />
      <path d="M-30-30H62L0 75-30 90z" fill="#99996c" /><path d="M245 15L265 38 258 60 238 82 208 84 230 50z" fill="#8b915d" />
      <path d="M115 115L135 120 130 140 112 132z" fill="#77904f" />
      <path d="M62-20H122L92 40 100 80 62 85 40 74-10 136V85z" fill="#dccfaa" />
      <path d="M258 38L285 40 292 66 262 92 212 118 195 112 250 82z" fill="#b79c74" />
    </g>
    <path d="M200 132L262 98 292 68M195 128L255 96 288 64M205 136L268 102 296 72" fill="none" stroke="#8b6e49" strokeWidth="1.200" opacity=".5" filter="url(#edge)" />
    <g filter="url(#soft)">
      <path d="M112 0H168L185 18 170 20 154 5 108 61 94 61 90 28z" fill="#15151f" />
      <path d="M36 72L60 74 84 96 108 104 106 120 88 108 50 84 0 150V122z" fill="#14141d" />
      <path d="M52 2L44 18 34 26 31 38 24 36 27 22 40 12z" fill="#24262a" /><path d="M100 70L114 74 133 92 130 98 104 84z" fill="#2a2d28" />
    </g>
    <g stroke="#1b1c1e" strokeWidth="6" strokeDasharray="5 4" opacity=".8" filter="url(#edge)"><path d="M178 8L196 24M204 12L216 22M222 18L250 42" /></g>
    <g filter="url(#edge)">
      <g stroke="#c4c7bd" strokeWidth="1.300"><path d="M194 27L240 74M198 25L245 70M203 27L243 63M190 34L236 78M225 22L260 52M230 20L264 46" /></g>
      <g stroke="#3c4038" strokeWidth="1.500" strokeDasharray="4 3"><path d="M196 30L238 72M201 27L243 68M228 21L262 50" /></g>
      <path d="M94 63L110 60 152 91 126 89z" fill="#cdcfb9" /><path d="M94 62L154 5 112 61z" fill="#6c7c80" />
      <path d="M154 4L193.500 36 150 91 110 62z" fill="#e7e9e8" /><path d="M143 60L161 71 148 88 130 76z" fill="#f5f6f4" />
      <path d="M106 77L130 93 122 100 100 86z" fill="#ddd4c2" />
      <path d="M50 82L91 107 0 223V144z" fill="#d0dbde" /><path d="M91 107L114 130 0 281V223z" fill="#ebf2f6" />
      <path d="M91 107L0 223" stroke="#a3b0b3" /><path d="M54 81L92 106 114 128 90 110 72 96z" fill="#b6d1dd" />
      <path d="M112 126L139 144" stroke="#dde2e0" strokeWidth="2.500" />
      <path d="M141 105L147 142M56 208L58 226" stroke="#413a2c" strokeWidth="2" />
      <path d="M68 196L66 170M68 190L60 168M68 190L76 168M69 184L82 172M67 186L58 180" stroke="#7f9cb4" strokeWidth="1.600" opacity=".55" />
    </g>
    <g filter="url(#twigs)"><ellipse cx="70" cy="178" rx="14" ry="20" fill="#5f7f9c" fillOpacity=".7" /></g>
    <g filter="url(#rough)" fill="#2b241a"><ellipse cx="142" cy="110" rx="6" ry="10" /><ellipse cx="155" cy="164" rx="18" ry="10" /><ellipse cx="80" cy="206" rx="24" ry="12" /></g>

    <g fill="#fdc9f6" stroke="#17101a" strokeWidth="1.200">{POINTS.map(([x, y], i) => <circle key={i} cx={x} cy={y} r="3.200" />)}</g>
  </svg>
);

/* ---------- data ---------- */

const ELEVATIONS = ['22.2455', '22.2455', '22.477', '22.2455', '22.477', '22.404', '22.477', '22.404', '22.404', '22.6824'];
const FIELDS: [string, string][] = [['workspace', 'project2'], ['csv file', 'boundary.csv'], ['out shapfile', 'pnt_elev7'], ['EPSG', '32119']];

const PanelButtons = () => <HeaderButtons><Chevron s={12} w={1.500} /><Pin /><Close s={13} w={1.500} /></HeaderButtons>;

const Layer = ({ name, arrow, h }: { name: string; arrow?: boolean; h: number }) => (
  <TreeRow $pl={arrow ? 17 : 32} $h={h}>{arrow && <Arrow><Triangle /></Arrow>}<CheckBox><Check /></CheckBox>{name}</TreeRow>
);

export default function App() {
  return (
    <Screen>
      <Global />
      <Ribbon>
        <RibbonTab $w={89}>Project</RibbonTab>
        <RibbonTab $w={74} $ml={6}>Map</RibbonTab>
        <RibbonTab $w={82} $kind="active">Insert</RibbonTab>
        <RibbonTab $w={100}>Analysis</RibbonTab>
        <RibbonTab $w={76}>View</RibbonTab>
        <RibbonTab $w={68}>Edit</RibbonTab>
        <RibbonTab $w={102}>Imagery</RibbonTab>
        <RibbonTab $w={80}>Share</RibbonTab>
        <RibbonTab $w={78}>Help</RibbonTab>
        <RibbonTab $w={77} $ml={24} $kind="context">Table</RibbonTab>
      </Ribbon>
      <Workspace>
        <ContentsPanel>
          <PanelHeader $pl={8} $pr={8.5}><PanelTitle>Contents</PanelTitle><PanelButtons /></PanelHeader>
          <SearchRow><Funnel /><SearchBox><span>Search</span><Magnifier /><Chevron s={11} /></SearchBox></SearchRow>
          <ListModes>
            <ListMode $on><TreeIcon /></ListMode><ListMode><CylinderIcon /></ListMode><ListMode><SelectionIcon /></ListMode>
            <ListMode><PencilIcon /></ListMode><ListMode><GridPlus /></ListMode><ListMode><TagIcon /></ListMode><ListMode><SatelliteIcon /></ListMode>
          </ListModes>
          <SectionTitle>Drawing Order</SectionTitle>
          <TreeRow $pl={3} $h={37}><Arrow $root><Triangle /></Arrow><MapIcon s={21} /><RootName>Map</RootName></TreeRow>
          <Layer name="pnt_elev1" arrow h={26} />
          <TreeRow $pl={36} $h={28}><PointSymbol /></TreeRow>
          <Layer name="boundary_pnts" arrow h={35} />
          <TreeRow $pl={36} $h={19}><PointSymbol /></TreeRow>
          <Layer name="World Imagery" h={45} />
        </ContentsPanel>

        <Center>
          <DocTabs>
            <DocTab $w={94}><MapIcon s={20} /><span>Map</span><Close c="#77787a" /></DocTab>
            <TabMenu><Chevron s={12} w={1.500} /></TabMenu>
          </DocTabs>
          <MapFrame><Imagery /><LegendButton><LegendIcon /></LegendButton></MapFrame>
          <StatusBar>
            <Combo>1:1,212<Caret /></Combo>
            <Divider $ml={4} />
            <Slot $ml={8} $w={20}><GridPlus s={20} /></Slot>
            <Slot $ml={6} $w={17}><GridIcon /></Slot>
            <Slot $ml={7} $w={21}><DynamicIcon /></Slot>
            <Slot $ml={4} $w={21}><SnapIcon /></Slot>
            <Slot $ml={4} $w={21}><NorthIcon /></Slot>
            <Slot $ml={8} $w={11}><Chevron s={11} w={2} c="#2c2c2c" /></Slot>
            <Divider $ml={10} />
            <BarText $ml={136} $w={180} $size={13.9}>699,201.90E 186,660.77N m</BarText>
            <Slot $ml={12} $w={12}><Chevron s={12} w={2.200} /></Slot>
            <Divider $ml={137} />
            <Slot $ml={7} $w={21} $dim><ZoomToIcon map /></Slot>
            <BarText $ml={5} $w={132} $size={14} $c="#a0a2a4">Selected Features: 0</BarText>
            <Divider $ml={7} />
            <Slot $ml={10} $w={16}><RangeMapIcon /></Slot>
            <Divider $ml={10} />
            <Slot $ml={9} $w={16}><PauseIcon /></Slot>
            <Divider $ml={10} />
            <Slot $ml={7} $w={21}><Refresh /></Slot>
          </StatusBar>

          <DocTabs $mt={9}>
            <DocTab $w={128}><TableIcon /><span>pnt_elev1</span><Close s={13} c="#77787a" /></DocTab>
            <TabMenu><Chevron s={12} w={1.500} /></TabMenu>
          </DocTabs>
          <TablePane>
            <TableToolbar>
              <BarText $ml={-1} $w={37} $b $size={13.6}>Field:</BarText>
              <Slot $ml={9} $w={20}><FieldIcon /></Slot><BarText $ml={4} $w={28}>Add</BarText>
              <Slot $ml={11} $w={20}><FieldIcon calc /></Slot><BarText $ml={4.500} $w={62}>Calculate</BarText>
              <Divider $ml={11.500} $h={28} $c="#c9cacd" />
              <BarText $ml={9} $w={68} $b $size={13.7}>Selection:</BarText>
              <Slot $ml={8} $w={20}><SelectAttrIcon /></Slot><BarText $ml={4} $w={130}>Select By Attributes</BarText>
              <Slot $ml={12} $w={21} $dim><ZoomToIcon /></Slot><BarText $ml={3} $w={61} $size={14.4} $c={DIM}>Zoom To</BarText>
              <Slot $ml={11} $w={21}><SwitchIcon /></Slot><BarText $ml={3} $w={44} $size={14}>Switch</BarText>
              <Slot $ml={10} $w={19} $dim><RowsIcon kind="plain" /></Slot><BarText $ml={4} $w={36} $size={14.4} $c={DIM}>Clear</BarText>
              <Slot $ml={11} $w={19} $dim><RowsIcon kind="delete" /></Slot><BarText $ml={5} $w={45} $size={14.4} $c={DIM}>Delete</BarText>
              <Slot $ml={10} $w={20} $dim><CopyIcon /></Slot><BarText $ml={4} $w={36} $size={14.4} $c={DIM}>Copy</BarText>
              <Spacer />
              <MenuIcon />
            </TableToolbar>
            <GridBox>
              <GridMain>
                <GridRows>
                  <GridRow $head>
                    <Cell $kind="corner"><CornerIcon /></Cell>
                    <Cell $kind="sort">FID</Cell><Cell>Shape</Cell><Cell>Id</Cell><Cell>elevation</Cell>
                  </GridRow>
                  {ELEVATIONS.map((e, i) => (
                    <GridRow key={i} $shade={i % 2 === 1}>
                      <Cell $kind={i ? 'num' : 'current'}>{i + 1}</Cell>
                      <Cell $kind={i ? undefined : 'selected'}>{i}</Cell><Cell>Point</Cell><Cell $right>0</Cell><Cell $right>{e}</Cell>
                    </GridRow>
                  ))}
                  <GridRow><Cell $kind="num" /><Cell /><Cell /><Cell /><Cell /></GridRow>
                </GridRows>
                <HScroll><Chevron dir={90} c="#c9c9c9" /><Chevron dir={-90} c="#c9c9c9" /></HScroll>
              </GridMain>
              <VScroll><Chevron dir={180} s={9} /><Thumb /><Chevron s={9} /></VScroll>
            </GridBox>
            <TableFooter>
              <ViewToggle><RowsIcon kind="mixed" /></ViewToggle>
              <Slot $ml={12} $w={19}><RowsIcon kind="all" h={14} /></Slot>
              <Slot $ml={22} $w={12}><Seek /></Slot><Slot $ml={16} $w={12}><Seek next /></Slot>
              <BarText $ml={16} $w={114}>0 of 338 selected</BarText>
              <Spacer />
              <BarText $ml={0} $w={42}>Filters:</BarText>
              <DisabledGroup><ClockIcon /><RangeIcon /></DisabledGroup>
              <Slot $ml={5} $w={21}><FilterSelect /></Slot>
              <Divider $ml={2} /><Slot $ml={8} $w={11}><UpDown /></Slot>
              <Slot $ml={18} $w={9}><Minus /></Slot>
              <Slider><i /><b /><i /></Slider>
              <Slot $ml={10} $w={10}><Plus /></Slot>
              <ZoomCombo>100%<Caret /></ZoomCombo>
              <Divider $ml={6} /><Slot $ml={10} $w={21}><Refresh /></Slot><Slot $ml={0} $w={5} />
            </TableFooter>
          </TablePane>
        </Center>

        <RightColumn>
          <GpPanel>
            <PanelHeader $pl={8.500} $pr={8}><PanelTitle>Geoprocessing</PanelTitle><PanelButtons /></PanelHeader>
            <ToolHeader><CircleIcon kind="back" /><span>Script</span><CircleIcon kind="add" /></ToolHeader>
            <ToolTabs><ToolTab $on>Parameters</ToolTab><ToolTab>Environments</ToolTab><CircleIcon kind="help" /></ToolTabs>
            <Fields>
              {FIELDS.map(([label, value], i) => (
                <Field key={label}>{label}
                  <FieldLine><Input $w={i ? 366 : 333}>{value}</Input>{!i && <FolderIcon />}</FieldLine>
                </Field>
              ))}
            </Fields>
            <Spacer />
            <RunButton><PlayIcon /><span>Run</span><Chevron s={9} w={2} /></RunButton>
            <Message>
              <DoneIcon />
              <MessageBody>Script completed.
                <LinkLine><a>View Details</a><a>Open History</a><BulbIcon /><span>Suggestions</span></LinkLine>
              </MessageBody>
              <Close c="#7c7f7c" />
            </Message>
          </GpPanel>
          <BottomTabs><BottomTab $w={67}>Catalog</BottomTab><BottomTab $w={113} $on>Geoprocessing</BottomTab><BottomTab $w={92}>Symbology</BottomTab></BottomTabs>
        </RightColumn>
        <SideDock><span>Export</span></SideDock>
      </Workspace>
    </Screen>
  );
}
